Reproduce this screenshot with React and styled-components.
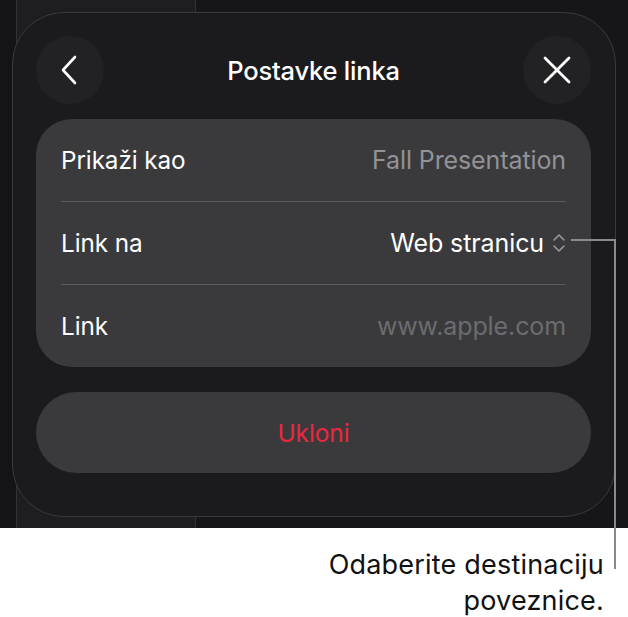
import React from "react";
import styled, { createGlobalStyle } from "styled-components";

const GlobalStyle = createGlobalStyle`
  html, body {
    margin: 0;
    padding: 0;
    background: #ffffff;
  }
  body {
    font-family: Inter, "Noto Sans", sans-serif;
    -webkit-font-smoothing: antialiased;
  }
`;

const rows = [
  { label: "Prikaži kao", value: "Fall Presentation", tone: "muted" },
  { label: "Link na", value: "Web stranicu", tone: "bright", picker: true },
  { label: "Link", value: "www.apple.com", tone: "faint" },
];

const toneColors = {
  muted: "#929297",
  bright: "#ffffff",
  faint: "#6c6c70",
};

const App = () => {
  return (
    <Page>
      <GlobalStyle />
      <Screen>
        <Sheet>
          <Header>
            <RoundButton aria-label="Natrag">
              <svg width="20" height="30" viewBox="0 0 20 30" fill="none">
                <path
                  d="M15 2 L3 15 L15 28"
                  stroke="#ffffff"
                  strokeWidth="2.6"
                  strokeLinecap="round"
                  strokeLinejoin="round"
                />
              </svg>
            </RoundButton>
            <Title>Postavke linka</Title>
            <RoundButton aria-label="Zatvori">
              <svg width="30" height="30" viewBox="0 0 30 30" fill="none">
                <path
                  d="M3 3 L27 27 M27 3 L3 27"
                  stroke="#ffffff"
                  strokeWidth="2.8"
                  strokeLinecap="round"
                />
              </svg>
            </RoundButton>
          </Header>

          <Group>
            {rows.map((row) => (
              <Row key={row.label}>
                <Label>{row.label}</Label>
                <Value $tone={row.tone}>
                  {row.value}
                  {row.picker && (
                    <svg width="14" height="20" viewBox="0 0 14 20" fill="none">
                      <path
                        d="M2 7 L7 2 L12 7 M2 13 L7 18 L12 13"
                        stroke="#98989d"
                        strokeWidth="1.6"
                        strokeLinecap="round"
                        strokeLinejoin="round"
                      />
                    </svg>
                  )}
                </Value>
              </Row>
            ))}
          </Group>

          <RemoveButton>Ukloni</RemoveButton>
        </Sheet>
      </Screen>

      <Caption>
        Odaberite destinaciju
        <br />
        poveznice.
      </Caption>

      <LeaderH />
      <LeaderV />
    </Page>
  );
};

export default App;

const Page = styled.div`
  position: relative;
  width: 628px;
  height: 617px;
  overflow: hidden;
  background: #ffffff;
`;

const Screen = styled.div`
  height: 528px;
  box-sizing: border-box;
  padding: 12px 12px 0 12px;
  background: linear-gradient(
    to right,
    #141416 0 16px,
    #333335 16px 17px,
    #1e1e20 17px 195px,
    #333335 195px 196px,
    #161618 196px
  );
`;

const Sheet = styled.div`
  width: 604px;
  height: 505px;
  box-sizing: border-box;
  border: 1px solid #3a3a3c;
  border-radius: 52px;
  background: #1b1b1d;
  padding: 23px 24px 0 23px;
  display: flex;
  flex-direction: column;
`;

const Header = styled.div`
  height: 68px;
  display: flex;
  align-items: center;
  justify-content: space-between;
`;

const RoundButton = styled.button`
  width: 68px;
  height: 68px;
  border-radius: 50%;
  border: none;
  padding: 0;
  background: #222224;
  display: flex;
  align-items: center;
  justify-content: center;
`;

const Title = styled.h1`
  margin: 0;
  font-size: 25.5px;
  font-weight: 500;
  color: #ffffff;
  letter-spacing: -0.2px;
`;

const Group = styled.div`
  margin-top: 15px;
  border-radius: 36px;
  background: #3a3a3c;
  padding: 0 25px;
`;

const Row = styled.div`
  height: 82px;
  display: flex;
  align-items: center;
  justify-content: space-between;

  & + & {
    border-top: 1.5px solid #5a5a5e;
  }
`;

const Label = styled.span`
  font-size: 24.3px;
  color: #ffffff;
  letter-spacing: -0.1px;
`;

const Value = styled.span`
  display: flex;
  align-items: center;
  gap: 8px;
  font-size: 25px;
  letter-spacing: -0.1px;
  color: ${({ $tone }) => toneColors[$tone]};
`;

const RemoveButton = styled.button`
  margin-top: 25px;
  height: 81px;
  border: none;
  border-radius: 41px;
  background: #3a3a3c;
  color: #f0263f;
  font-family: inherit;
  font-size: 24.5px;
  letter-spacing: -0.1px;
`;

const Caption = styled.p`
  margin: 19px 24px 0 0;
  text-align: right;
  font-size: 27px;
  line-height: 36px;
  color: #111111;
  letter-spacing: 0.2px;
`;

const LeaderH = styled.div`
  position: absolute;
  left: 571px;
  top: 239px;
  width: 45px;
  height: 1.5px;
  background: #8a8a8c;
`;

const LeaderV = styled.div`
  position: absolute;
  left: 614px;
  top: 239px;
  width: 1.5px;
  height: 330px;
  background: #8a8a8c;
`;
